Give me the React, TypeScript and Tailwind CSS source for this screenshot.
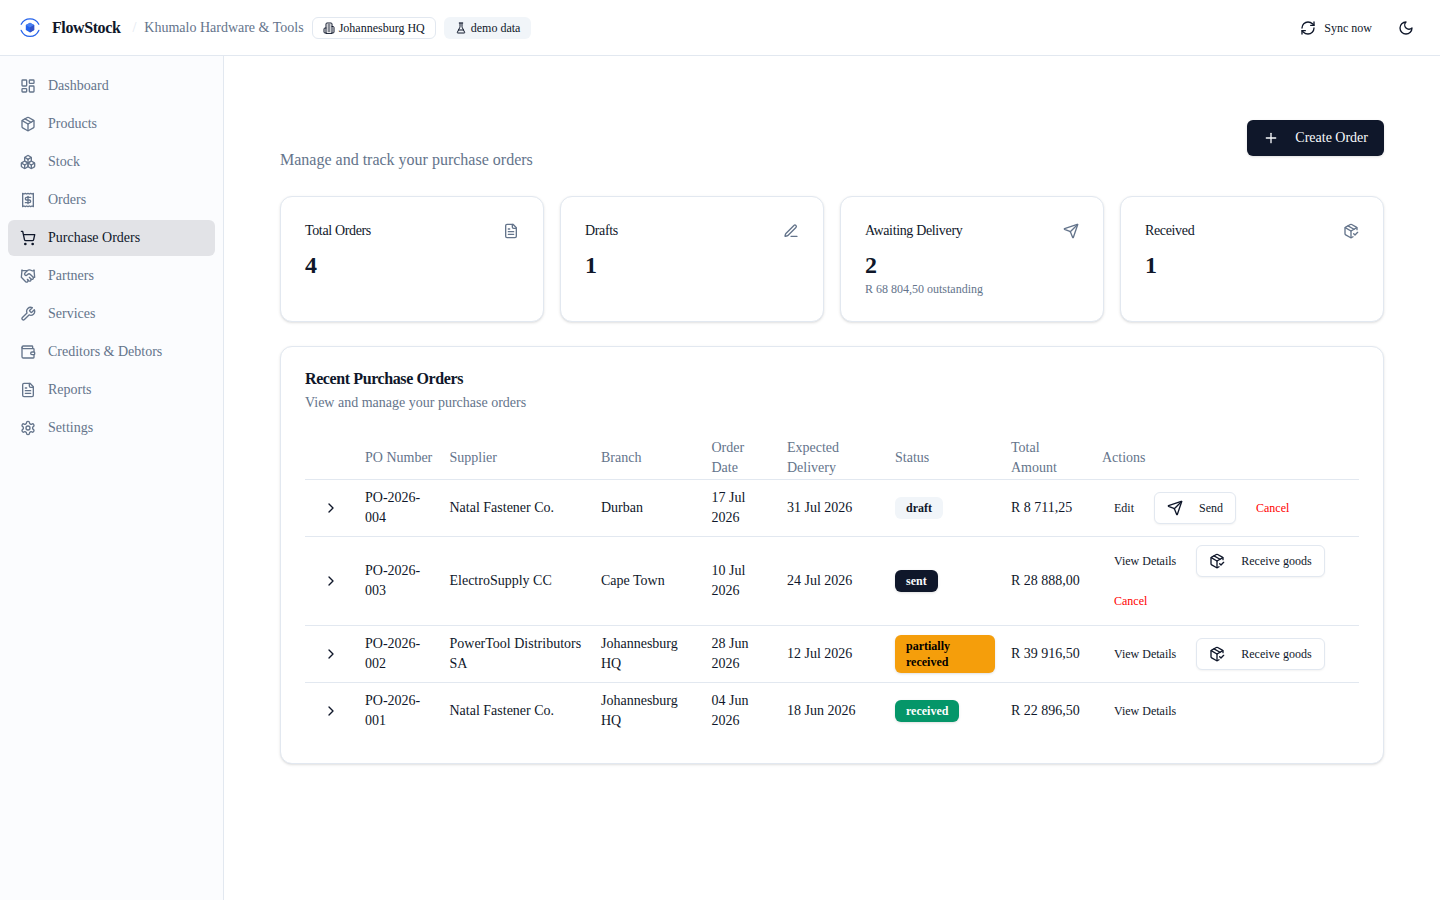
import React from "react";
import {
  Boxes,
  ChevronRight,
  Handshake,
  LayoutDashboard,
  Package,
  PackageCheck,
  Plus,
  Receipt,
  RefreshCw,
  Send,
  ShoppingCart,
  Wallet,
} from "lucide-react";

type IconProps = { className?: string };

function strokeIcon(paths: string[], extra?: React.ReactNode) {
  return function StrokeIcon({ className }: IconProps) {
    return (
      <svg
        viewBox="0 0 24 24"
        className={className}
        fill="none"
        stroke="currentColor"
        strokeWidth="2"
        strokeLinecap="round"
        strokeLinejoin="round"
      >
        {paths.map((d) => (
          <path key={d} d={d} />
        ))}
        {extra}
      </svg>
    );
  };
}

const BuildingIcon = strokeIcon([
  "M6 22V4a2 2 0 0 1 2-2h8a2 2 0 0 1 2 2v18Z",
  "M6 12H4a2 2 0 0 0-2 2v6a2 2 0 0 0 2 2h2",
  "M18 9h2a2 2 0 0 1 2 2v9a2 2 0 0 1-2 2h-2",
  "M10 6h4",
  "M10 10h4",
  "M10 14h4",
  "M10 18h4",
]);

const FlaskIcon = strokeIcon([
  "M10 2v7.527a2 2 0 0 1-.211.896L4.72 20.55a1 1 0 0 0 .9 1.45h12.76a1 1 0 0 0 .9-1.45l-5.069-10.127A2 2 0 0 1 14 9.527V2",
  "M8.5 2h7",
  "M7 16h10",
]);

const PenIcon = strokeIcon([
  "M12 20h9",
  "M16.376 3.622a1 1 0 0 1 3.002 3.002L7.368 18.635a2 2 0 0 1-.855.506l-2.872.838a.5.5 0 0 1-.62-.62l.838-2.872a2 2 0 0 1 .506-.854z",
]);

const FileIcon = strokeIcon([
  "M15 2H6a2 2 0 0 0-2 2v16a2 2 0 0 0 2 2h12a2 2 0 0 0 2-2V7Z",
  "M14 2v4a2 2 0 0 0 2 2h4",
  "M10 9H8",
  "M16 13H8",
  "M16 17H8",
]);

const MoonIcon = strokeIcon(["M12 3a6 6 0 0 0 9 9 9 9 0 1 1-9-9Z"]);

const WrenchIcon = strokeIcon([
  "M14.7 6.3a1 1 0 0 0 0 1.4l1.6 1.6a1 1 0 0 0 1.4 0l3.77-3.77a6 6 0 0 1-7.94 7.94l-6.91 6.91a2.12 2.12 0 0 1-3-3l6.91-6.91a6 6 0 0 1 7.94-7.94l-3.76 3.76z",
]);

const GearIcon = strokeIcon(
  [
    "M12.22 2h-.44a2 2 0 0 0-2 2v.18a2 2 0 0 1-1 1.73l-.43.25a2 2 0 0 1-2 0l-.15-.08a2 2 0 0 0-2.73.73l-.22.38a2 2 0 0 0 .73 2.73l.15.1a2 2 0 0 1 1 1.72v.51a2 2 0 0 1-1 1.74l-.15.09a2 2 0 0 0-.73 2.73l.22.38a2 2 0 0 0 2.73.73l.15-.08a2 2 0 0 1 2 0l.43.25a2 2 0 0 1 1 1.73V20a2 2 0 0 0 2 2h.44a2 2 0 0 0 2-2v-.18a2 2 0 0 1 1-1.73l.43-.25a2 2 0 0 1 2 0l.15.08a2 2 0 0 0 2.73-.73l.22-.39a2 2 0 0 0-.73-2.73l-.15-.08a2 2 0 0 1-1-1.74v-.5a2 2 0 0 1 1-1.74l.15-.09a2 2 0 0 0 .73-2.73l-.22-.38a2 2 0 0 0-2.73-.73l-.15.08a2 2 0 0 1-2 0l-.43-.25a2 2 0 0 1-1-1.73V4a2 2 0 0 0-2-2z",
  ],
  <circle cx="12" cy="12" r="3" />,
);

const NAV = [
  { label: "Dashboard", Icon: LayoutDashboard },
  { label: "Products", Icon: Package },
  { label: "Stock", Icon: Boxes },
  { label: "Orders", Icon: Receipt },
  { label: "Purchase Orders", Icon: ShoppingCart, active: true },
  { label: "Partners", Icon: Handshake },
  { label: "Services", Icon: WrenchIcon },
  { label: "Creditors & Debtors", Icon: Wallet },
  { label: "Reports", Icon: FileIcon },
  { label: "Settings", Icon: GearIcon },
];

const STATS = [
  { label: "Total Orders", value: "4", Icon: FileIcon },
  { label: "Drafts", value: "1", Icon: PenIcon },
  { label: "Awaiting Delivery", value: "2", Icon: Send, note: "R 68 804,50 outstanding" },
  { label: "Received", value: "1", Icon: PackageCheck },
];

type Action = "Edit" | "Send" | "Cancel" | "View Details" | "Receive goods";

type Order = {
  po: string;
  supplier: string;
  branch: string;
  ordered: string;
  expected: string;
  status: string;
  badge: string;
  total: string;
  actions: Action[];
};

const ORDERS: Order[] = [
  {
    po: "PO-2026-004",
    supplier: "Natal Fastener Co.",
    branch: "Durban",
    ordered: "17 Jul 2026",
    expected: "31 Jul 2026",
    status: "draft",
    badge: "bg-[#f1f5f9] text-[#0f172a]",
    total: "R 8 711,25",
    actions: ["Edit", "Send", "Cancel"],
  },
  {
    po: "PO-2026-003",
    supplier: "ElectroSupply CC",
    branch: "Cape Town",
    ordered: "10 Jul 2026",
    expected: "24 Jul 2026",
    status: "sent",
    badge: "bg-[#0f172a] text-[#f8fafc] shadow-sm",
    total: "R 28 888,00",
    actions: ["View Details", "Receive goods", "Cancel"],
  },
  {
    po: "PO-2026-002",
    supplier: "PowerTool Distributors SA",
    branch: "Johannesburg HQ",
    ordered: "28 Jun 2026",
    expected: "12 Jul 2026",
    status: "partially received",
    badge: "bg-[#f59e0b] text-black shadow-sm",
    total: "R 39 916,50",
    actions: ["View Details", "Receive goods"],
  },
  {
    po: "PO-2026-001",
    supplier: "Natal Fastener Co.",
    branch: "Johannesburg HQ",
    ordered: "04 Jun 2026",
    expected: "18 Jun 2026",
    status: "received",
    badge: "bg-[#059669] text-white shadow-sm",
    total: "R 22 896,50",
    actions: ["View Details"],
  },
];

const HEADINGS = [
  "",
  "PO Number",
  "Supplier",
  "Branch",
  "Order Date",
  "Expected Delivery",
  "Status",
  "Total Amount",
  "Actions",
];

function Logo() {
  return (
    <svg viewBox="0 0 20 20" className="size-5 shrink-0" fill="none">
      <path d="M1.2 6.200C3 2.800 6.200 .9 10 .9s7 1.900 8.800 5.300" stroke="#2563eb" strokeWidth="1.300" strokeLinecap="round" />
      <path d="M1.200 12.400C3 16.400 6.200 18.300 10 18.300s7-1.900 8.800-5.900" stroke="#2563eb" strokeWidth="1.300" strokeLinecap="round" />
      <path d="M10 4.800l4.200 2.300v5L10 14.500l-4.200-2.400v-5z" fill="#2563eb" />
      <path d="M10 4.800l4.200 2.300L10 9.500 5.800 7.100z" fill="#4a80f2" />
      <path d="M10 9.500l4.200-2.400v5L10 14.500z" fill="#3451c6" />
    </svg>
  );
}

function TopBar() {
  return (
    <header className="flex h-14 shrink-0 items-center border-b border-[#e2e8f0] bg-white pr-4 pl-5">
      <Logo />
      <span className="ml-3 text-base font-bold tracking-tight">FlowStock</span>
      <span className="ml-3 text-sm text-[#e2e8f0]">/</span>
      <span className="ml-2 text-sm text-[#64748b]">Khumalo Hardware &amp; Tools</span>
      <span className="ml-2 flex h-[22px] items-center gap-1 rounded-md border border-[#e2e8f0] px-2.5 text-xs">
        <BuildingIcon className="size-3" />
        Johannesburg HQ
      </span>
      <span className="ml-2 flex h-[22px] items-center gap-1 rounded-md border border-transparent bg-[#f1f5f9] px-2.5 text-xs">
        <FlaskIcon className="size-3" />
        demo data
      </span>
      <div className="ml-auto flex items-center gap-1">
        <button className="flex h-8 items-center gap-2 px-3 text-xs">
          <RefreshCw className="size-4" />
          Sync now
        </button>
        <button className="flex size-9 items-center justify-center">
          <MoonIcon className="size-4" />
        </button>
      </div>
    </header>
  );
}

function Sidebar() {
  return (
    <nav className="flex w-56 shrink-0 flex-col gap-0.5 border-r border-[#e2e8f0] bg-[#fbfcfe] px-2 py-3">
      {NAV.map(({ label, Icon, active }) => (
        <a
          key={label}
          className={
            active
              ? "flex h-9 items-center gap-3 rounded-md bg-[#e2e3e7] px-3 text-sm text-[#0f172a]"
              : "flex h-9 items-center gap-3 rounded-md px-3 text-sm text-[#64748b]"
          }
        >
          <Icon className="size-4" />
          {label}
        </a>
      ))}
    </nav>
  );
}

function ActionButton({ action }: { action: Action }) {
  if (action === "Send" || action === "Receive goods") {
    const Icon = action === "Send" ? Send : PackageCheck;
    return (
      <button className="flex h-8 items-center gap-4 rounded-md border border-[#e2e8f0] bg-white px-3 text-xs whitespace-nowrap shadow-xs">
        <Icon className="size-4" />
        {action}
      </button>
    );
  }
  return (
    <button
      className={
        action === "Cancel"
          ? "flex h-8 items-center px-3 text-xs text-[#ff0000]"
          : "flex h-8 items-center px-3 text-xs whitespace-nowrap"
      }
    >
      {action}
    </button>
  );
}

function OrdersTable() {
  return (
    <table className="w-full table-fixed text-sm">
      <colgroup>
        <col className="w-[52px]" />
        <col className="w-[84.5px]" />
        <col className="w-[151.5px]" />
        <col className="w-[110.5px]" />
        <col className="w-[75.5px]" />
        <col className="w-[108px]" />
        <col className="w-[116px]" />
        <col className="w-[91px]" />
        <col />
      </colgroup>
      <thead>
        <tr className="border-b border-[#e2e8f0]">
          {HEADINGS.map((h) => (
            <th key={h} className="px-2 py-px text-left align-middle font-normal text-[#64748b]">
              {h}
            </th>
          ))}
        </tr>
      </thead>
      <tbody>
        {ORDERS.map((o) => (
          <tr key={o.po} className="border-b border-[#e2e8f0] last:border-0">
            <td className="p-2">
              <div className="flex w-9 justify-center">
                <ChevronRight className="size-4" />
              </div>
            </td>
            <td className="p-2">{o.po}</td>
            <td className="p-2">{o.supplier}</td>
            <td className="p-2">{o.branch}</td>
            <td className="p-2">{o.ordered}</td>
            <td className="p-2">{o.expected}</td>
            <td className="p-2">
              <div className="flex">
                <span className={`rounded-md border border-transparent px-2.5 py-0.5 text-xs font-semibold ${o.badge}`}>
                  {o.status}
                </span>
              </div>
            </td>
            <td className="p-2 whitespace-nowrap">{o.total}</td>
            <td className="p-2">
              <div className="flex flex-wrap gap-2">
                {o.actions.map((a) => (
                  <ActionButton key={a} action={a} />
                ))}
              </div>
            </td>
          </tr>
        ))}
      </tbody>
    </table>
  );
}

export default function App() {
  return (
    <div className="flex h-screen flex-col overflow-hidden bg-white font-['Liberation_Serif',serif] text-[#0f172a]">
      <TopBar />
      <div className="flex min-h-0 flex-1">
        <Sidebar />
        <main className="flex min-w-0 flex-1 flex-col gap-6 px-14 pt-12">
          <div className="flex h-[68px] items-center justify-between">
            <p className="self-end text-base text-[#64748b]">Manage and track your purchase orders</p>
            <button className="flex h-9 items-center gap-4 rounded-md bg-[#0f172a] px-4 text-sm text-[#f8fafc] shadow-sm">
              <Plus className="size-4" />
              Create Order
            </button>
          </div>
          <div className="grid grid-cols-4 gap-4">
            {STATS.map(({ label, value, Icon, note }) => (
              <section key={label} className="h-[126px] rounded-xl border border-[#e2e8f0] bg-white p-6 shadow-sm">
                <div className="flex items-center justify-between pb-2">
                  <h3 className="text-sm tracking-tight">{label}</h3>
                  <Icon className="size-4 text-[#64748b]" />
                </div>
                <div className="text-2xl font-bold">{value}</div>
                {note && <p className="text-xs text-[#64748b]">{note}</p>}
              </section>
            ))}
          </div>
          <section className="rounded-xl border border-[#e2e8f0] bg-white p-6 shadow-sm">
            <h2 className="text-base leading-none font-semibold tracking-tight">Recent Purchase Orders</h2>
            <p className="mt-1.5 mb-6 text-sm text-[#64748b]">View and manage your purchase orders</p>
            <OrdersTable />
          </section>
        </main>
      </div>
    </div>
  );
}
